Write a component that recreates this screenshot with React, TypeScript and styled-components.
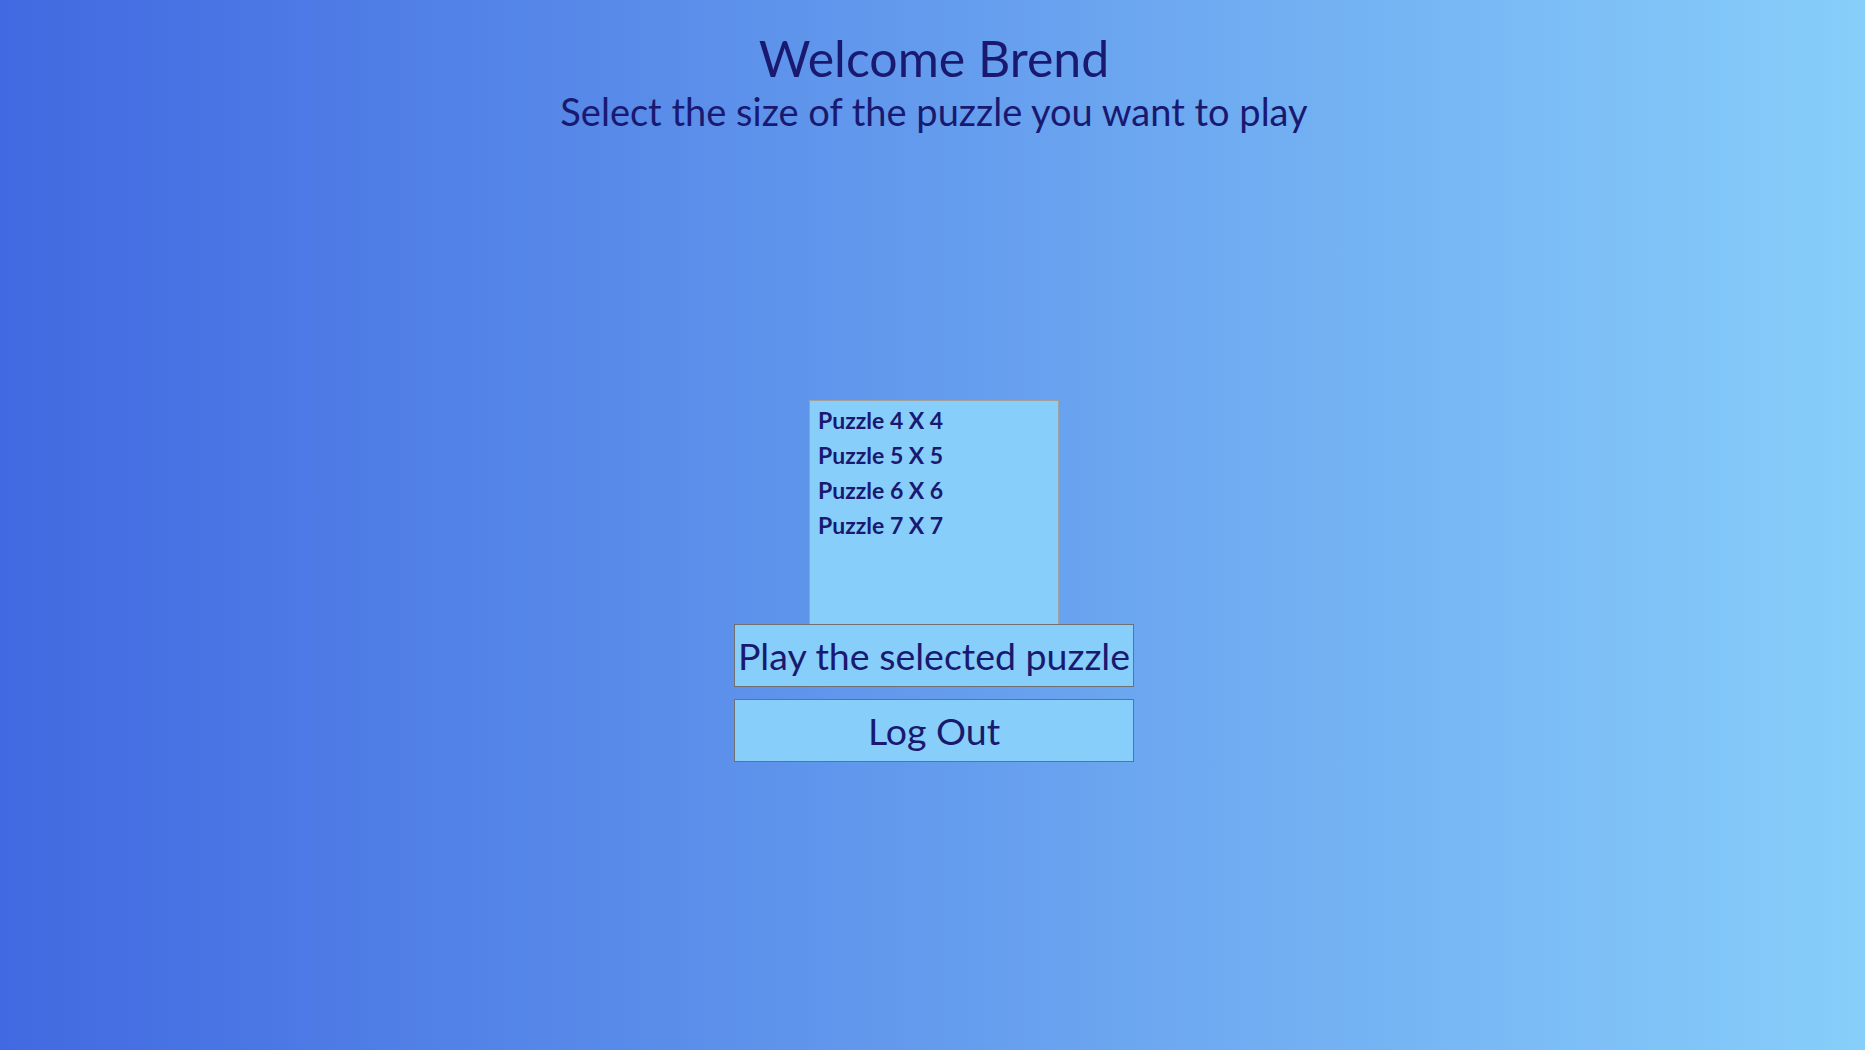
import React, { useState } from "react";
import styled, { createGlobalStyle } from "styled-components";

const GlobalStyle = createGlobalStyle`
  html, body { margin: 0; padding: 0; }
  body {
    font-family: Lato, "Open Sans", sans-serif;
    color: #191970;
  }
`;

const Page = styled.div`
  min-height: 1050px;
  background: linear-gradient(to right, #4169e1, #87cefa);
  display: flex;
  flex-direction: column;
  align-items: center;
  padding: 30px 0 0 3px;
  box-sizing: border-box;
`;

const Title = styled.h1`
  margin: 0;
  font-size: 50px;
  line-height: 56px;
  font-weight: 400;
`;

const Subtitle = styled.h2`
  margin: 2px 0 0;
  font-size: 38px;
  line-height: 46px;
  font-weight: 400;
`;

const Panel = styled.div`
  margin-top: 266px;
  display: flex;
  flex-direction: column;
  align-items: center;
`;

const ListBox = styled.ul`
  list-style: none;
  margin: 0;
  padding: 2px 0 0;
  width: 250px;
  height: 224px;
  box-sizing: border-box;
  background: #87cefa;
  border: 1px solid #a0a0a0;
  border-bottom: none;
`;

const ListItem = styled.li<{ $selected: boolean }>`
  padding: 0 8px;
  font-size: 23px;
  line-height: 35px;
  font-weight: 700;
  cursor: pointer;
  background: ${(p) => (p.$selected ? "#6fb8f0" : "transparent")};
`;

const ActionButton = styled.button<{ $gap?: number }>`
  width: 400px;
  height: 63px;
  margin-top: ${(p) => p.$gap ?? 0}px;
  background: #87cefa;
  border: 1px solid #707070;
  color: #191970;
  font-family: Lato, "Open Sans", sans-serif;
  font-size: 37.5px;
  white-space: nowrap;
  overflow: hidden;
  padding: 0;
  cursor: pointer;
`;

const puzzles = [4, 5, 6, 7];

export default function App() {
  const [selected, setSelected] = useState<number | null>(null);
  return (
    <>
      <GlobalStyle />
      <Page>
        <Title>Welcome Brend</Title>
        <Subtitle>Select the size of the puzzle you want to play</Subtitle>
        <Panel>
          <ListBox>
            {puzzles.map((n) => (
              <ListItem key={n} $selected={selected === n} onClick={() => setSelected(n)}>
                Puzzle {n} X {n}
              </ListItem>
            ))}
          </ListBox>
          <ActionButton>Play the selected puzzle</ActionButton>
          <ActionButton $gap={12}>Log Out</ActionButton>
        </Panel>
      </Page>
    </>
  );
}
